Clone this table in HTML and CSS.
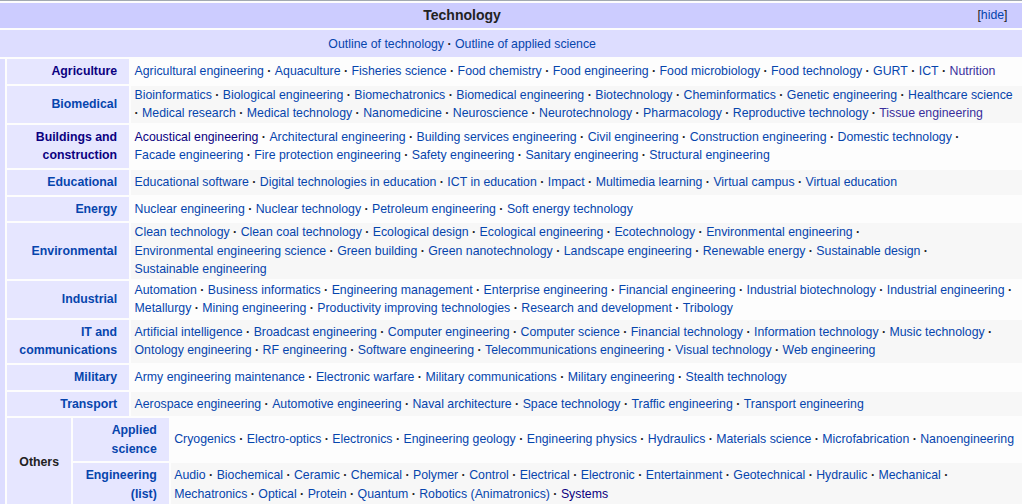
FILE: index.html
```html
<!DOCTYPE html>
<html lang="en">
<head>
<meta charset="utf-8">
<title>Technology navbox</title>
<link rel="stylesheet" href="styles.css">
</head>
<body>
<div class="navbox">
  <div class="title">
    <span class="title-text">Technology</span>
    <span class="hide">[<a href="#">hide</a>]</span>
  </div>
  <div class="above">
    <ul class="hlist">
      <li><a href="#">Outline of technology</a></li>
      <li><a href="#">Outline of applied science</a></li>
    </ul>
  </div>
  <div class="body">
    <div class="stripe"></div>
    <div class="inner">
      <div class="groups">
        <div class="group"><a class="v" href="#">Agriculture</a></div>
        <div class="list odd"><ul class="hlist">
          <li><a href="#">Agricultural engineering</a></li>
          <li><a href="#">Aquaculture</a></li>
          <li><a href="#">Fisheries science</a></li>
          <li><a href="#">Food chemistry</a></li>
          <li><a href="#">Food engineering</a></li>
          <li><a href="#">Food microbiology</a></li>
          <li><a href="#">Food technology</a></li>
          <li><a href="#">GURT</a></li>
          <li><a href="#">ICT</a></li>
          <li><a class="vl" href="#">Nutrition</a></li>
        </ul></div>

        <div class="group"><a href="#">Biomedical</a></div>
        <div class="list even"><ul class="hlist">
          <li><a href="#">Bioinformatics</a></li>
          <li><a href="#">Biological engineering</a></li>
          <li><a href="#">Biomechatronics</a></li>
          <li><a href="#">Biomedical engineering</a></li>
          <li><a href="#">Biotechnology</a></li>
          <li><a href="#">Cheminformatics</a></li>
          <li><a href="#">Genetic engineering</a></li>
          <li><a href="#">Healthcare science</a></li>
          <li><a href="#">Medical research</a></li>
          <li><a href="#">Medical technology</a></li>
          <li><a href="#">Nanomedicine</a></li>
          <li><a href="#">Neuroscience</a></li>
          <li><a href="#">Neurotechnology</a></li>
          <li><a href="#">Pharmacology</a></li>
          <li><a href="#">Reproductive technology</a></li>
          <li><a class="vl" href="#">Tissue engineering</a></li>
        </ul></div>

        <div class="group"><a class="v" href="#">Buildings and construction</a></div>
        <div class="list odd"><ul class="hlist">
          <li><a class="v" href="#">Acoustical engineering</a></li>
          <li><a href="#">Architectural engineering</a></li>
          <li><a href="#">Building services engineering</a></li>
          <li><a href="#">Civil engineering</a></li>
          <li><a href="#">Construction engineering</a></li>
          <li><a href="#">Domestic technology</a></li>
          <li><a href="#">Facade engineering</a></li>
          <li><a href="#">Fire protection engineering</a></li>
          <li><a href="#">Safety engineering</a></li>
          <li><a href="#">Sanitary engineering</a></li>
          <li><a href="#">Structural engineering</a></li>
        </ul></div>

        <div class="group"><a href="#">Educational</a></div>
        <div class="list even"><ul class="hlist">
          <li><a href="#">Educational software</a></li>
          <li><a href="#">Digital technologies in education</a></li>
          <li><a href="#">ICT in education</a></li>
          <li><a href="#">Impact</a></li>
          <li><a href="#">Multimedia learning</a></li>
          <li><a href="#">Virtual campus</a></li>
          <li><a href="#">Virtual education</a></li>
        </ul></div>

        <div class="group"><a href="#">Energy</a></div>
        <div class="list odd"><ul class="hlist">
          <li><a href="#">Nuclear engineering</a></li>
          <li><a href="#">Nuclear technology</a></li>
          <li><a href="#">Petroleum engineering</a></li>
          <li><a href="#">Soft energy technology</a></li>
        </ul></div>

        <div class="group"><a href="#">Environmental</a></div>
        <div class="list even"><ul class="hlist">
          <li><a href="#">Clean technology</a></li>
          <li><a href="#">Clean coal technology</a></li>
          <li><a href="#">Ecological design</a></li>
          <li><a href="#">Ecological engineering</a></li>
          <li><a href="#">Ecotechnology</a></li>
          <li><a href="#">Environmental engineering</a></li>
          <li><a href="#">Environmental engineering science</a></li>
          <li><a href="#">Green building</a></li>
          <li><a href="#">Green nanotechnology</a></li>
          <li><a href="#">Landscape engineering</a></li>
          <li><a href="#">Renewable energy</a></li>
          <li><a href="#">Sustainable design</a></li>
          <li><a href="#">Sustainable engineering</a></li>
        </ul></div>

        <div class="group"><a href="#">Industrial</a></div>
        <div class="list odd"><ul class="hlist">
          <li><a href="#">Automation</a></li>
          <li><a href="#">Business informatics</a></li>
          <li><a href="#">Engineering management</a></li>
          <li><a href="#">Enterprise engineering</a></li>
          <li><a href="#">Financial engineering</a></li>
          <li><a href="#">Industrial biotechnology</a></li>
          <li><a href="#">Industrial engineering</a></li>
          <li><a href="#">Metallurgy</a></li>
          <li><a href="#">Mining engineering</a></li>
          <li><a href="#">Productivity improving technologies</a></li>
          <li><a href="#">Research and development</a></li>
          <li><a href="#">Tribology</a></li>
        </ul></div>

        <div class="group"><a href="#">IT and communications</a></div>
        <div class="list even"><ul class="hlist">
          <li><a href="#">Artificial intelligence</a></li>
          <li><a href="#">Broadcast engineering</a></li>
          <li><a href="#">Computer engineering</a></li>
          <li><a href="#">Computer science</a></li>
          <li><a href="#">Financial technology</a></li>
          <li><a href="#">Information technology</a></li>
          <li><a href="#">Music technology</a></li>
          <li><a href="#">Ontology engineering</a></li>
          <li><a href="#">RF engineering</a></li>
          <li><a href="#">Software engineering</a></li>
          <li><a href="#">Telecommunications engineering</a></li>
          <li><a href="#">Visual technology</a></li>
          <li><a href="#">Web engineering</a></li>
        </ul></div>

        <div class="group"><a href="#">Military</a></div>
        <div class="list odd"><ul class="hlist">
          <li><a href="#">Army engineering maintenance</a></li>
          <li><a href="#">Electronic warfare</a></li>
          <li><a href="#">Military communications</a></li>
          <li><a href="#">Military engineering</a></li>
          <li><a href="#">Stealth technology</a></li>
        </ul></div>

        <div class="group"><a href="#">Transport</a></div>
        <div class="list even"><ul class="hlist">
          <li><a href="#">Aerospace engineering</a></li>
          <li><a href="#">Automotive engineering</a></li>
          <li><a href="#">Naval architecture</a></li>
          <li><a href="#">Space technology</a></li>
          <li><a href="#">Traffic engineering</a></li>
          <li><a href="#">Transport engineering</a></li>
        </ul></div>
      </div>

      <div class="others">
        <div class="group plain">Others</div>
        <div class="subgroups">
          <div class="group"><a href="#">Applied science</a></div>
          <div class="list odd"><ul class="hlist">
            <li><a href="#">Cryogenics</a></li>
            <li><a href="#">Electro-optics</a></li>
            <li><a href="#">Electronics</a></li>
            <li><a href="#">Engineering geology</a></li>
            <li><a href="#">Engineering physics</a></li>
            <li><a href="#">Hydraulics</a></li>
            <li><a href="#">Materials science</a></li>
            <li><a href="#">Microfabrication</a></li>
            <li><a href="#">Nanoengineering</a></li>
          </ul></div>

          <div class="group"><a href="#">Engineering</a> <a href="#">(list)</a></div>
          <div class="list even"><ul class="hlist">
            <li><a href="#">Audio</a></li>
            <li><a href="#">Biochemical</a></li>
            <li><a href="#">Ceramic</a></li>
            <li><a href="#">Chemical</a></li>
            <li><a href="#">Polymer</a></li>
            <li><a href="#">Control</a></li>
            <li><a href="#">Electrical</a></li>
            <li><a href="#">Electronic</a></li>
            <li><a href="#">Entertainment</a></li>
            <li><a href="#">Geotechnical</a></li>
            <li><a href="#">Hydraulic</a></li>
            <li><a href="#">Mechanical</a></li>
            <li><a href="#">Mechatronics</a></li>
            <li><a href="#">Optical</a></li>
            <li><a href="#">Protein</a></li>
            <li><a href="#">Quantum</a></li>
            <li><a href="#">Robotics (Animatronics)</a></li>
            <li><a class="v" href="#">Systems</a></li>
          </ul></div>
        </div>
      </div>
    </div>
  </div>
</div>
</body>
</html>
```

FILE: styles.css
```css
html, body {
  margin: 0;
  padding: 0;
  overflow: hidden;
  background: #ffffff;
}

body {
  font-family: "Liberation Sans", Arial, sans-serif;
  font-size: 12.32px;
  line-height: 18.48px;
  color: #222222;
}

a {
  color: #0645ad;
  text-decoration: none;
  white-space: nowrap;
}

a.v {
  color: #0b0080;
}

a.vl {
  color: #3a2f9c;
}

.navbox {
  width: 1022px;
  border-top: 1px solid #a2a9b1;
  padding-top: 2px;
  background: #fdfdfd;
  display: flex;
  flex-direction: column;
  gap: 2px;
}

.title {
  background: #ccccff;
  display: flex;
  align-items: center;
  padding: 3.08px 14.5px 3.08px 12.32px;
}

.title-text {
  flex: 1;
  text-align: center;
  font-size: 14.04px;
  font-weight: bold;
  padding-right: 21.8px;
}

.hide {
  width: 6em;
  text-align: right;
  font-weight: normal;
}

.above {
  background: #ddddff;
  text-align: center;
  padding: 5px 110px 4.2px 12.32px;
}

.hlist {
  margin: 0;
  padding: 0;
  list-style: none;
}

.hlist li {
  display: inline;
}

.hlist li::after {
  content: " · ";
  font-weight: bold;
}

.hlist li:last-child::after {
  content: "";
}

.body {
  display: flex;
  gap: 2px;
}

.stripe {
  width: 5px;
  flex: none;
  background: #ddddff;
}

.inner {
  flex: 1;
  display: flex;
  flex-direction: column;
  gap: 2px;
}

.groups,
.subgroups {
  display: grid;
  grid-template-columns: min-content 1fr;
  gap: 2px;
}

.others {
  display: grid;
  grid-template-columns: min-content 1fr;
  gap: 2px;
}

.group {
  background: #e6e6ff;
  padding: 3.08px 12.32px;
  font-weight: bold;
  display: flex;
  flex-wrap: wrap;
  align-items: center;
  align-content: center;
  justify-content: flex-end;
  text-align: right;
  column-gap: 0.28em;
}

.group a {
  white-space: normal;
}

.group.plain {
  justify-content: center;
  text-align: center;
  color: #222222;
}

.list {
  display: flex;
  align-items: center;
  padding: 0 5px 0 3.08px;
  text-align: left;
}

.odd {
  background: #fdfdfd;
}

.even {
  background: #f7f7f7;
}
```
